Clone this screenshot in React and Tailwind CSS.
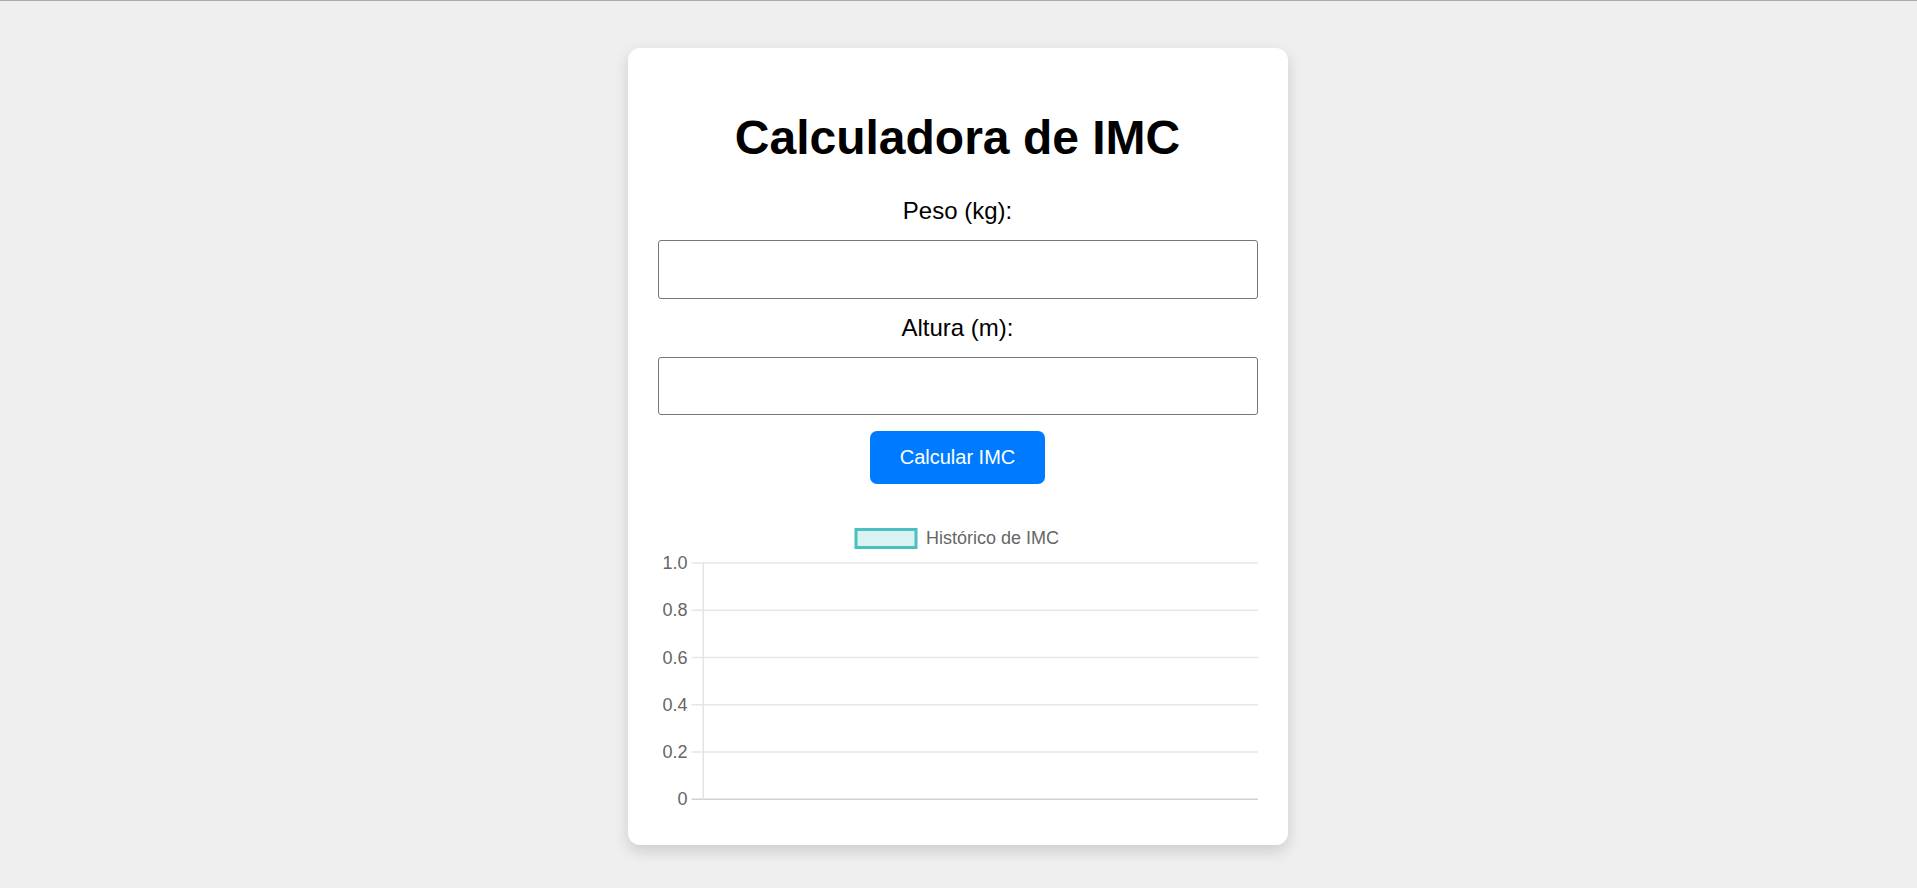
import React, { useState } from "react";

const ticks = [
  { label: "1.0", y: 48 },
  { label: "0.8", y: 95.3 },
  { label: "0.6", y: 142.5 },
  { label: "0.4", y: 189.8 },
  { label: "0.2", y: 237 },
  { label: "0", y: 284.3 },
];

const HistoricoChart = () => {
  return (
    <div className="mt-[31px] h-[300px] w-full">
      <svg width="600" height="300" viewBox="0 0 600 300" className="block">
        {/* leyenda */}
        <rect x="198" y="14.5" width="60" height="18" fill="rgba(75,192,192,0.2)" stroke="rgb(75,192,192)" strokeWidth="3" />
        <text x="268" y="29" fontSize="18" fill="#666" fontFamily="'Liberation Sans', Arial, sans-serif">
          Histórico de IMC
        </text>

        {/* rejilla */}
        {ticks.map((t) => (
          <g key={t.label}>
            <line x1="33.5" x2="600" y1={t.y} y2={t.y} stroke={t.label === "0" ? "#d2d2d2" : "#e6e6e6"} strokeWidth="1.5" />
            <text
              x="29.5"
              y={t.y + 6}
              textAnchor="end"
              fontSize="18"
              fill="#666"
              fontFamily="'Liberation Sans', Arial, sans-serif"
            >
              {t.label}
            </text>
          </g>
        ))}
        <line x1="45.3" x2="45.3" y1="48" y2="284.3" stroke="#e3e3e3" strokeWidth="1.5" />
      </svg>
    </div>
  );
};

const App = () => {
  const [peso, setPeso] = useState("");
  const [altura, setAltura] = useState("");

  const handleSubmit = (e) => {
    e.preventDefault();
  };

  return (
    <div className="min-h-screen bg-[#efefef] border-t border-[#a9a9a9] pt-[47px] font-['Liberation_Sans',Arial,sans-serif] text-black">
      <div className="mx-auto w-[660px] -translate-x-[1px] rounded-[12px] bg-white p-[30px] text-center shadow-[0_6px_15px_rgba(0,0,0,0.15)]">
        <h1 className="mt-[32px] mb-[32px] text-[48px] font-bold leading-[55px]">Calculadora de IMC</h1>
        <form onSubmit={handleSubmit}>
          <label className="block text-[24px] leading-[28px] mb-[15px]">Peso (kg):</label>
          <input
            type="number"
            value={peso}
            onChange={(e) => setPeso(e.target.value)}
            className="block w-full h-[59px] mb-[15px] rounded-[3px] border border-[#767676] bg-white px-3 text-[20px] outline-none"
          />
          <label className="block text-[24px] leading-[28px] mb-[15px]">Altura (m):</label>
          <input
            type="number"
            value={altura}
            onChange={(e) => setAltura(e.target.value)}
            className="block w-full h-[58px] mb-[16px] rounded-[3px] border border-[#767676] bg-white px-3 text-[20px] outline-none"
          />
          <button
            type="submit"
            className="h-[53px] rounded-[7px] bg-[#007bff] px-[30px] text-[20px] leading-[23px] text-white"
          >
            Calcular IMC
          </button>
        </form>
        <HistoricoChart />
      </div>
    </div>
  );
};

export default App;
